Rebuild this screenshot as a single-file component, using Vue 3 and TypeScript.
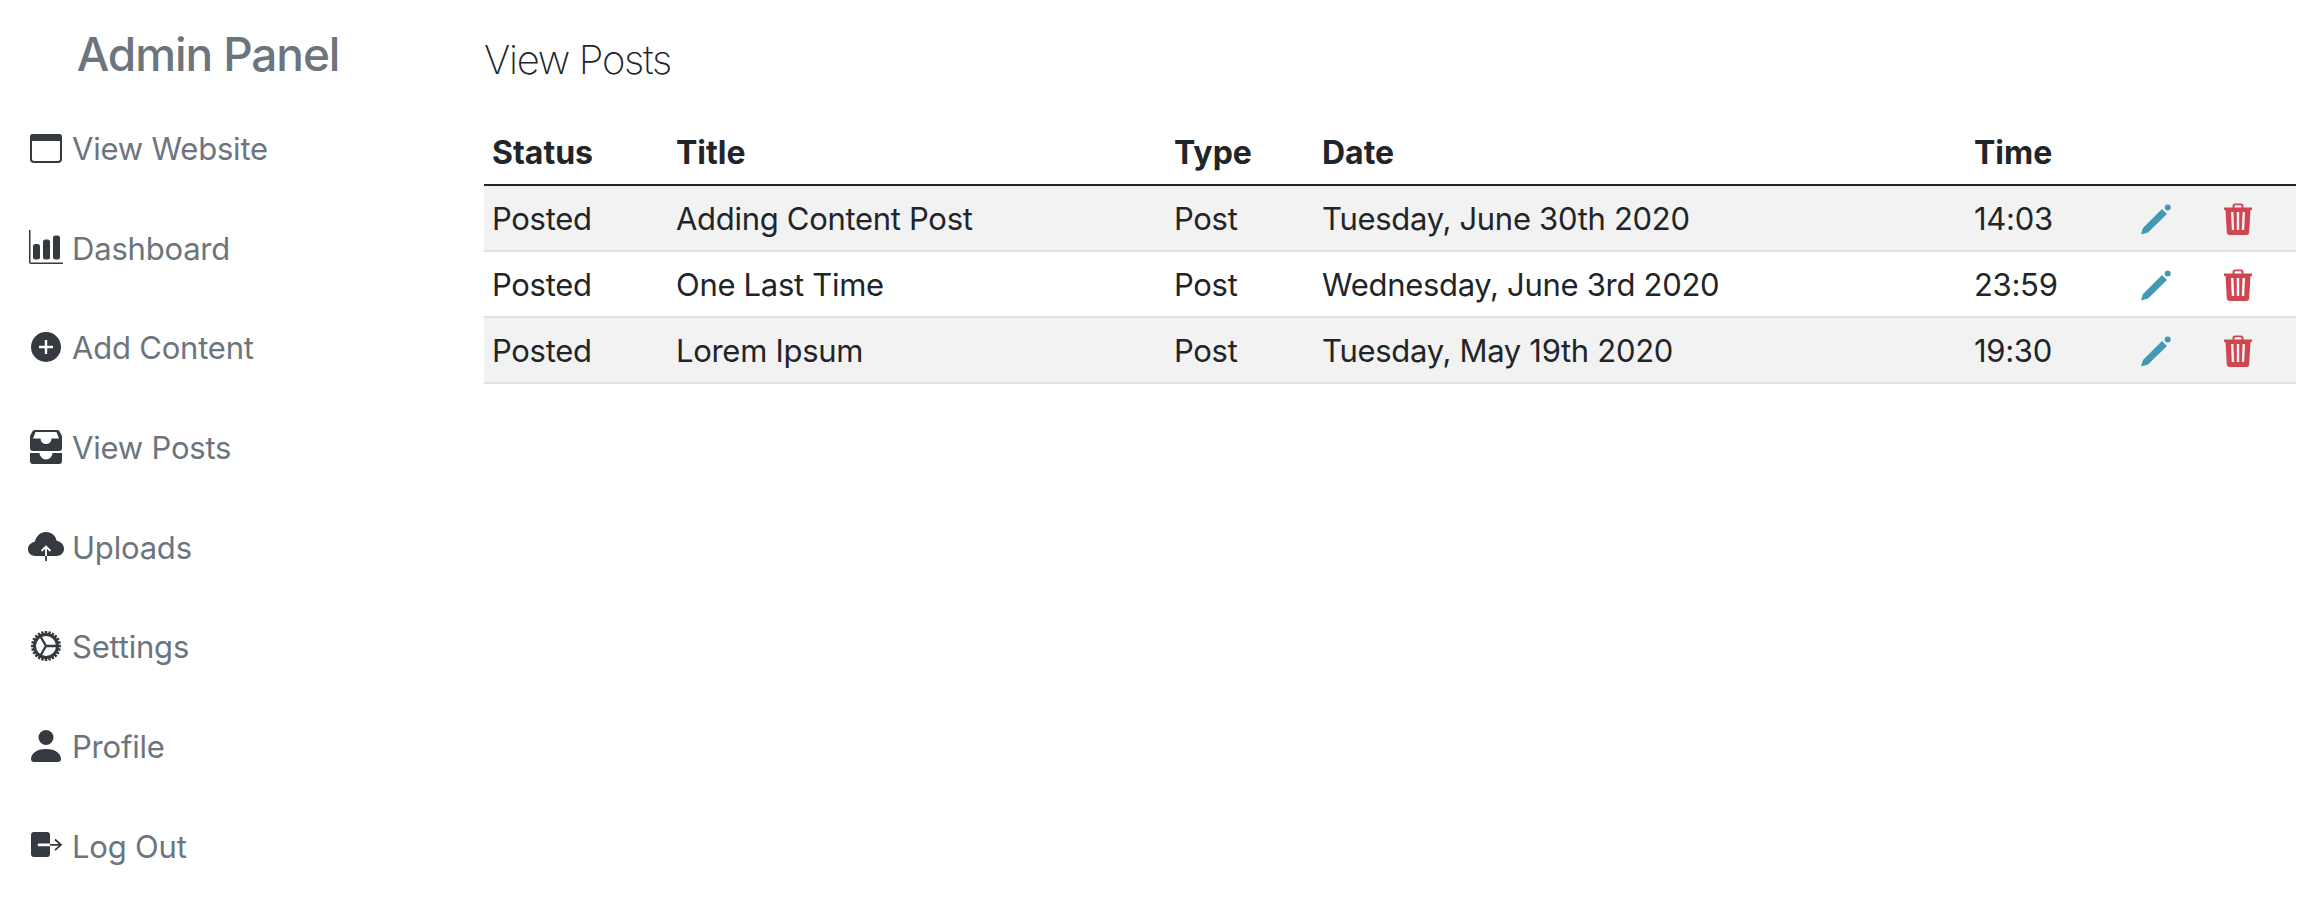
<script setup lang="ts">
const navItems = [
  { label: "View Website", icon: "window" },
  { label: "Dashboard", icon: "chart" },
  { label: "Add Content", icon: "plus" },
  { label: "View Posts", icon: "inbox" },
  { label: "Uploads", icon: "cloud" },
  { label: "Settings", icon: "gear" },
  { label: "Profile", icon: "person" },
  { label: "Log Out", icon: "logout" },
];

const posts = [
  { status: "Posted", title: "Adding Content Post", type: "Post", date: "Tuesday, June 30th 2020", time: "14:03" },
  { status: "Posted", title: "One Last Time", type: "Post", date: "Wednesday, June 3rd 2020", time: "23:59" },
  { status: "Posted", title: "Lorem Ipsum", type: "Post", date: "Tuesday, May 19th 2020", time: "19:30" },
];

const gearTeeth = Array.from({ length: 24 }, (_, i) => i * 15);
</script>

<template>
  <div class="layout">
    <aside class="sidebar">
      <h2 class="brand">Admin Panel</h2>
      <nav class="nav">
        <a v-for="item in navItems" :key="item.label" class="nav-link" href="#">
          <svg class="nav-icon" viewBox="0 0 36 36" fill="#343a40">
            <template v-if="item.icon === 'window'">
              <rect x="3" y="5" width="30" height="27" rx="3" fill="none" stroke="#343a40" stroke-width="2" />
              <path d="M5 4h26a3 3 0 0 1 3 3v4H2V7a3 3 0 0 1 3-3z" />
            </template>
            <template v-else-if="item.icon === 'chart'">
              <path d="M1 0h1.500v32.500H35V34H3a2 2 0 0 1-2-2z" />
              <rect x="5" y="14" width="7" height="15.500" rx="2.500" />
              <rect x="15" y="9.500" width="7" height="20" rx="2.500" />
              <rect x="25" y="5.500" width="7" height="24" rx="2.500" />
            </template>
            <template v-else-if="item.icon === 'plus'">
              <circle cx="18" cy="18" r="15" />
              <path d="M18 11v14M11 18h14" stroke="#fff" stroke-width="2.400" />
            </template>
            <template v-else-if="item.icon === 'inbox'">
              <path d="M7 1h22a3 3 0 0 1 2.500 1.300L34 7v12a3 3 0 0 1-3 3H5a3 3 0 0 1-3-3V7l2.500-4.700A3 3 0 0 1 7 1zm.500 2L5 9.500h7.500a5.500 5.500 0 0 0 11 0H31L28.500 3z" fill-rule="evenodd" />
              <path d="M2 24h9.500a6.500 6.500 0 0 0 13 0H34v8a3 3 0 0 1-3 3H5a3 3 0 0 1-3-3z" />
            </template>
            <template v-else-if="item.icon === 'cloud'">
              <path d="M18 3c5.500 0 9.800 3.800 10.600 8.800C32.600 12.500 36 15.500 36 19.800 36 24.500 32.300 27 28.500 27h-21C3.500 27 0 24.500 0 20.300c0-4 3-6.800 6.800-7.500C8 7.200 12.500 3 18 3z" />
              <path d="M18 27V17.500M13.500 22l4.500-4.500 4.500 4.500" fill="none" stroke="#fff" stroke-width="1.800" />
              <path d="M18 32v-5" stroke="#343a40" stroke-width="1.800" />
            </template>
            <template v-else-if="item.icon === 'gear'">
              <circle cx="18" cy="18" r="11.500" fill="none" stroke="#343a40" stroke-width="3" />
              <path v-for="a in gearTeeth" :key="a" d="M18 3v3.500" stroke="#343a40" stroke-width="2.400" :transform="`rotate(${a} 18 18)`" />
              <path d="M18 18h11M18 18l-5.500-9.500M18 18l-5.500 9.500" stroke="#343a40" stroke-width="2.400" />
            </template>
            <template v-else-if="item.icon === 'person'">
              <circle cx="18" cy="9.500" r="7.500" />
              <path d="M6 34a3 3 0 0 1-3-3c0-5 5-10 15-10s15 5 15 10a3 3 0 0 1-3 3z" />
            </template>
            <template v-else>
              <path d="M6 4h13a3 3 0 0 1 3 3v8.500H11a1.400 1.400 0 0 0 0 2.800h11V26a3 3 0 0 1-3 3H6a3 3 0 0 1-3-3V7a3 3 0 0 1 3-3z" />
              <path d="M22 16.800h10M27 11.500l6 5.300-6 5.300" fill="none" stroke="#343a40" stroke-width="1.800" />
            </template>
          </svg>
          <span class="nav-label">{{ item.label }}</span>
        </a>
      </nav>
    </aside>

    <main class="content">
      <h1 class="page-title">View Posts</h1>
      <table class="posts">
        <colgroup>
          <col class="col-status" />
          <col class="col-title" />
          <col class="col-type" />
          <col class="col-date" />
          <col class="col-time" />
          <col class="col-edit" />
          <col class="col-delete" />
        </colgroup>
        <thead>
          <tr>
            <th>Status</th>
            <th>Title</th>
            <th>Type</th>
            <th>Date</th>
            <th>Time</th>
            <th></th>
            <th></th>
          </tr>
        </thead>
        <tbody>
          <tr v-for="post in posts" :key="post.title">
            <td>{{ post.status }}</td>
            <td>{{ post.title }}</td>
            <td>{{ post.type }}</td>
            <td>{{ post.date }}</td>
            <td>{{ post.time }}</td>
            <td class="action action-edit">
              <svg class="action-icon" viewBox="0 0 32 32" fill="#4299b4">
                <path d="M22 6l5 5L8 29.500l-6 1.700a.6.6 0 0 1-.8-.8L3 25z" />
                <circle cx="27.700" cy="4.500" r="3" />
              </svg>
            </td>
            <td class="action action-delete">
              <svg class="action-icon" viewBox="0 0 32 32" fill="#cf4651">
                <path fill-rule="evenodd" d="M2 4.500h8.500V3A2.500 2.500 0 0 1 13 .5h6A2.500 2.500 0 0 1 21.500 3v1.500H30V7h-1.500l-1.300 22a3 3 0 0 1-3 3H7.800a3 3 0 0 1-3-3L3.500 7H2zm10.500 0h7V3a.8.8 0 0 0-.8-.8h-5.400a.8.8 0 0 0-.8.8zM9 9l.8 18h2.400L11.400 9zm5.800 0v18h2.400V9zm5.800 0l-.8 18h2.400l.8-18z" />
              </svg>
            </td>
          </tr>
        </tbody>
      </table>
    </main>
  </div>
</template>

<style>
body {
  background: #fff;
}
</style>

<style scoped>
.layout {
  display: flex;
  min-height: 912px;
  font-family: Inter, "Liberation Sans", sans-serif;
  color: #212529;
}

.sidebar {
  width: 484px;
  flex: none;
  padding: 24px 0 0 28px;
  box-sizing: border-box;
}

.brand {
  width: 360px;
  margin: 0;
  text-align: center;
  font-size: 46px;
  line-height: 60px;
  font-weight: 500;
  letter-spacing: -1.1px;
  color: #6c757d;
}

.nav {
  margin-top: 14px;
  display: grid;
  grid-auto-rows: 99.7px;
}

.nav-link {
  display: flex;
  align-items: center;
  gap: 8px;
  color: #6c757d;
  text-decoration: none;
  font-size: 31px;
  letter-spacing: -0.2px;
}

.nav-label {
  padding-top: 1px;
}

.nav-icon {
  width: 36px;
  height: 36px;
  flex: none;
}

.content {
  flex: 1;
  padding: 30px 20px 0 0;
  min-width: 0;
}

.page-title {
  margin: 0 0 31px;
  font-size: 40px;
  line-height: 60px;
  font-weight: 200;
  letter-spacing: -1.3px;
  color: #212529;
}

.posts {
  width: 100%;
  table-layout: fixed;
  border-collapse: collapse;
  font-size: 31px;
  line-height: 48px;
  letter-spacing: -0.3px;
}

.col-status { width: 184px; }
.col-title { width: 498px; }
.col-type { width: 148px; }
.col-date { width: 652px; }
.col-time { width: 150px; }
.col-edit { width: 90px; }
.col-delete { width: 90px; }

th,
td {
  padding: 8px;
  text-align: left;
}

th {
  padding-bottom: 7px;
  font-size: 32px;
  letter-spacing: 0;
  font-weight: 700;
  border-bottom: 2px solid #212529;
}

td {
  padding-top: 9px;
  padding-bottom: 7px;
  border-bottom: 2px solid #dee2e6;
}

tbody tr:nth-child(odd) {
  background: #f2f2f2;
}

.action-icon {
  display: block;
  width: 32px;
  height: 32px;
}

.action-edit .action-icon {
  margin-left: 16px;
}

.action-delete .action-icon {
  margin-left: 8px;
}
</style>
